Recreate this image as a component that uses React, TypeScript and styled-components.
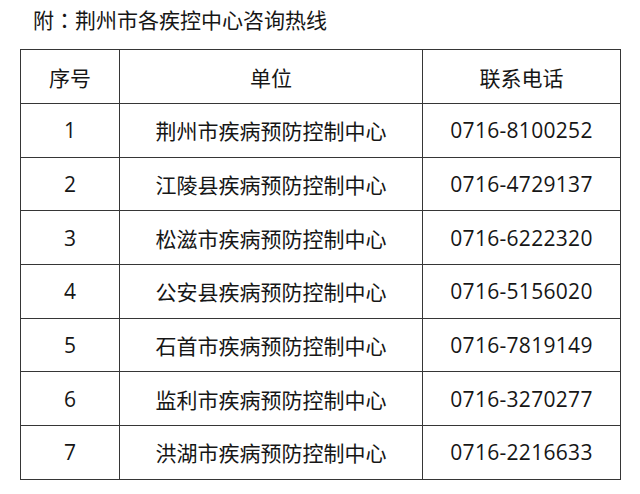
import React from 'react';
import styled, { createGlobalStyle } from 'styled-components';

const GlobalStyle = createGlobalStyle`
  html, body {
    margin: 0;
    padding: 0;
    background: #ffffff;
  }
  body {
    font-family: "Open Sans", "Noto Sans CJK SC", sans-serif;
    color: #161616;
  }
`;

const Page = styled.div`
  width: 640px;
  height: 494px;
  background: #fff;
  padding: 6px 0 0 20px;
  box-sizing: border-box;
`;

const Title = styled.div`
  font-size: 21px;
  line-height: 26px;
  padding-left: 13px;
  height: 43px;
`;

// full-width colon sits centred in its box, as in the TC glyph
const Colon = styled.span`
  font-family: "Noto Sans CJK TC", sans-serif;
`;

const Table = styled.table`
  border-collapse: collapse;
  width: 601px;
  table-layout: fixed;
  font-size: 21px;
`;

const Cell = styled.td<{ $width?: number }>`
  border: 1px solid #363636;
  text-align: center;
  vertical-align: middle;
  padding: 0;
  font-weight: 400;
  ${(p) => (p.$width ? `width: ${p.$width}px;` : '')}
`;

const HeadRow = styled.tr`
  height: 54px;
`;

const BodyRow = styled.tr`
  height: 53.7px;
`;

const Phone = styled.span`
  letter-spacing: 0.3px;
`;

const rows = [
  ['1', '荆州市疾病预防控制中心', '0716-8100252'],
  ['2', '江陵县疾病预防控制中心', '0716-4729137'],
  ['3', '松滋市疾病预防控制中心', '0716-6222320'],
  ['4', '公安县疾病预防控制中心', '0716-5156020'],
  ['5', '石首市疾病预防控制中心', '0716-7819149'],
  ['6', '监利市疾病预防控制中心', '0716-3270277'],
  ['7', '洪湖市疾病预防控制中心', '0716-2216633'],
];

export default function App() {
  return (
    <>
      <GlobalStyle />
      <Page>
        <Title>附<Colon>：</Colon>荆州市各疾控中心咨询热线</Title>
        <Table>
          <thead>
            <HeadRow>
              <Cell as="th" $width={98}>序号</Cell>
              <Cell as="th" $width={302}>单位</Cell>
              <Cell as="th">联系电话</Cell>
            </HeadRow>
          </thead>
          <tbody>
            {rows.map(([no, name, phone]) => (
              <BodyRow key={no}>
                <Cell>{no}</Cell>
                <Cell>{name}</Cell>
                <Cell><Phone>{phone}</Phone></Cell>
              </BodyRow>
            ))}
          </tbody>
        </Table>
      </Page>
    </>
  );
}
